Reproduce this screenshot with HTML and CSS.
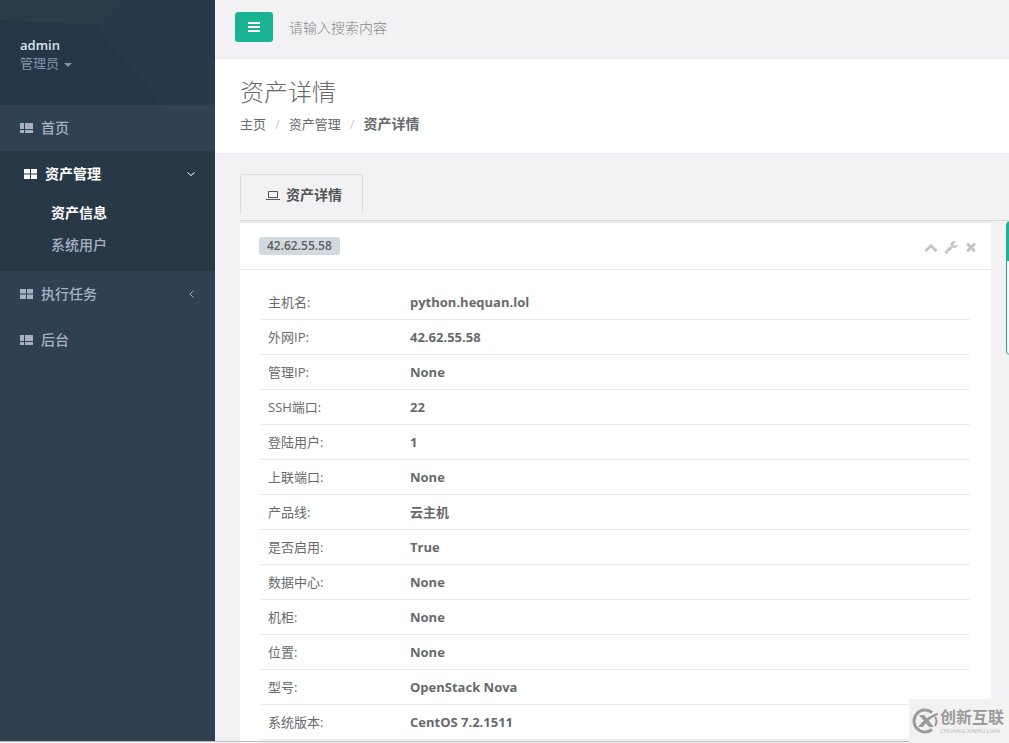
FILE: index.html
```
<!DOCTYPE html>
<html lang="zh-CN">
<head>
  <meta charset="UTF-8">
  <meta name="viewport" content="width=device-width, initial-scale=1.0">
  <title>资产详情</title>
  <link rel="stylesheet" href="styles.css">
</head>
<body>
  <div id="wrapper">
    <nav class="sidebar">
      <div class="nav-header">
        <svg class="header-bg" viewBox="0 0 215 105" preserveAspectRatio="none" aria-hidden="true">
          <path d="M0 20L95 25L163 105H0z" fill="#243747"/>
          <path d="M95 25L125 0H215V105H163z" fill="#273a49"/>
        </svg>
        <a class="profile" href="#">
          <strong>admin</strong>
          <span>管理员 <b class="caret"></b></span>
        </a>
      </div>
      <ul class="menu">
        <li>
          <a href="#">
            <svg class="icon" viewBox="0 0 13 10"><path d="M0 0h4v3H0zM5 0h8v6H5zM0 3h4v3H0zM0 7h4v3H0zM5 7h8v3H5z"/></svg>
            <span>首页</span>
          </a>
        </li>
        <li class="active">
          <a href="#">
            <svg class="icon" viewBox="0 0 13 10"><path d="M0 0h6v4.500H0zM7 0h6v4.500H7zM0 5.500h6V10H0zM7 5.500h6V10H7z"/></svg>
            <span>资产管理</span>
            <svg class="arrow" viewBox="0 0 8 8"><path d="M.5 2.500L4 5.500L7.500 2.500"/></svg>
          </a>
          <ul class="submenu">
            <li class="current"><a href="#">资产信息</a></li>
            <li><a href="#">系统用户</a></li>
          </ul>
        </li>
        <li>
          <a href="#">
            <svg class="icon" viewBox="0 0 13 10"><path d="M0 0h6v4.500H0zM7 0h6v4.500H7zM0 5.500h6V10H0zM7 5.500h6V10H7z"/></svg>
            <span>执行任务</span>
            <svg class="arrow" viewBox="0 0 8 8"><path d="M6.500 .5L3 4L6.500 7.500"/></svg>
          </a>
        </li>
        <li>
          <a href="#">
            <svg class="icon" viewBox="0 0 13 10"><path d="M0 0h4v3H0zM5 0h8v6H5zM0 3h4v3H0zM0 7h4v3H0zM5 7h8v3H5z"/></svg>
            <span>后台</span>
          </a>
        </li>
      </ul>
    </nav>

    <main class="page">
      <header class="topbar">
        <button class="toggle" type="button" aria-label="菜单">
          <svg viewBox="0 0 12 10"><path d="M0 0h12v2H0zM0 4h12v2H0zM0 8h12v2H0z"/></svg>
        </button>
        <input class="search" type="text" placeholder="请输入搜索内容" aria-label="请输入搜索内容">
      </header>

      <section class="heading">
        <h2>资产详情</h2>
        <ol class="breadcrumb">
          <li><a href="#">主页</a></li>
          <li><a href="#">资产管理</a></li>
          <li><strong>资产详情</strong></li>
        </ol>
      </section>

      <div class="tabs">
        <a class="tab" href="#">
          <svg viewBox="0 0 14 10"><path d="M2.500 1.500h9v6h-9zM0 9.500h14" fill="none" stroke="currentColor"/></svg>
          <span>资产详情</span>
        </a>
      </div>

      <div class="columns">
        <section class="ibox">
          <div class="ibox-title">
            <span class="label">42.62.55.58</span>
            <div class="tools">
              <a href="#" aria-label="收起">
                <svg viewBox="0 0 1792 1792"><path d="M1683 1331l-166 165q-19 19-45 19t-45-19l-531-531-531 531q-19 19-45 19t-45-19l-166-165q-19-19-19-45.500t19-45.500l742-741q19-19 45-19t45 19l742 741q19 19 19 45.500t-19 45.500z"/></svg>
              </a>
              <a href="#" aria-label="设置">
                <svg viewBox="0 0 1792 1792"><path d="M448 1472q0-26-19-45t-45-19-45 19-19 45 19 45 45 19 45-19 19-45zm644-420l-682 682q-37 37-90 37-52 0-91-37l-106-108q-38-36-38-90 0-53 38-91l681-681q39 98 114.500 173.500t173.500 114.500zm634-435q0 39-23 106-47 134-164.500 217.500t-258.500 83.500q-185 0-316.500-131.500t-131.500-316.500 131.500-316.500 316.500-131.500q58 0 121.500 16.500t107.500 46.500q16 11 16 28t-16 28l-293 169v224l193 107q5-3 79-48.500t135.500-81 70.500-35.500q15 0 23.500 10t8.500 25z"/></svg>
              </a>
              <a href="#" aria-label="关闭">
                <svg viewBox="0 0 1792 1792"><path d="M1490 1322q0 40-28 68l-136 136q-28 28-68 28t-68-28l-294-294-294 294q-28 28-68 28t-68-28l-136-136q-28-28-28-68t28-68l294-294-294-294q-28-28-28-68t28-68l136-136q28-28 68-28t68 28l294 294 294-294q28-28 68-28t68 28l136 136q28 28 28 68t-28 68l-294 294 294 294q28 28 28 68z"/></svg>
              </a>
            </div>
          </div>
          <div class="ibox-content">
            <table class="detail">
              <tbody>
                <tr><th scope="row">主机名:</th><td>python.hequan.lol</td></tr>
                <tr><th scope="row">外网IP:</th><td>42.62.55.58</td></tr>
                <tr><th scope="row">管理IP:</th><td>None</td></tr>
                <tr><th scope="row">SSH端口:</th><td>22</td></tr>
                <tr><th scope="row">登陆用户:</th><td>1</td></tr>
                <tr><th scope="row">上联端口:</th><td>None</td></tr>
                <tr><th scope="row">产品线:</th><td>云主机</td></tr>
                <tr><th scope="row">是否启用:</th><td>True</td></tr>
                <tr><th scope="row">数据中心:</th><td>None</td></tr>
                <tr><th scope="row">机柜:</th><td>None</td></tr>
                <tr><th scope="row">位置:</th><td>None</td></tr>
                <tr><th scope="row">型号:</th><td>OpenStack Nova</td></tr>
                <tr><th scope="row">系统版本:</th><td>CentOS 7.2.1511</td></tr>
              </tbody>
            </table>
          </div>
        </section>
        <aside class="side-panel">
          <div class="side-panel-head"></div>
        </aside>
      </div>
    </main>
  </div>

  <div class="watermark">
    <svg viewBox="0 0 26 26">
      <path d="M20 4.500A11 11 0 1 0 20 21.500" fill="none" stroke="currentColor" stroke-width="3"/>
      <path d="M23 9q3 4 0 9" fill="none" stroke="currentColor" stroke-width="2"/>
      <path d="M7 7h5l10 12h-5z"/>
      <path d="M26 5C20 6 11 12 6 19h5C15 13 20 9 26 7z"/>
    </svg>
    <div>
      <strong>创新互联</strong>
      <small>CHUANG XINHU LIAN</small>
    </div>
  </div>
</body>
</html>
```

FILE: styles.css
```
* {
  box-sizing: border-box;
}

body {
  margin: 0;
  height: 100vh;
  overflow: hidden;
  background-color: #f8f8fa;
  color: #676a6c;
  font-family: "Open Sans", "Noto Sans CJK SC", sans-serif;
  font-size: 13px;
  line-height: 18px;
}

a {
  color: inherit;
  text-decoration: none;
}

ul, ol {
  list-style: none;
  margin: 0;
  padding: 0;
}

svg {
  display: block;
  fill: currentColor;
}

#wrapper {
  display: flex;
  height: calc(100vh - 1px);
  overflow: hidden;
  border-bottom: 1px solid #b9bcbe;
}

/* Sidebar */
.sidebar {
  flex: 0 0 215px;
  background-color: #2f4050;
  color: #a7b1c2;
}

.nav-header {
  position: relative;
  height: 105px;
  padding: 36px 20px;
  background-color: #283c4a;
}

.header-bg {
  position: absolute;
  top: 0;
  left: 0;
  width: 100%;
  height: 100%;
}

.profile {
  position: relative;
  display: block;
  color: #8095a8;
}

.profile strong {
  display: block;
  color: #dfe4ed;
  font-weight: 600;
}

.caret {
  display: inline-block;
  margin-left: 2px;
  border: 4px solid transparent;
  border-top-color: currentColor;
  border-bottom: 0;
  vertical-align: middle;
}

.menu > li > a {
  display: flex;
  align-items: center;
  gap: 8px;
  height: 46px;
  padding: 0 20px;
  font-size: 14px;
  font-weight: 500;
}

.menu > li:first-child {
  background-color: #304151;
}

.menu > .active {
  padding-bottom: 10px;
  background-color: #293846;
}

.menu > .active > a {
  padding-left: 24px;
  color: #fff;
  font-weight: 700;
}

.icon {
  width: 13px;
  height: 10px;
}

.arrow {
  width: 8px;
  height: 8px;
  margin-left: auto;
  fill: none;
  stroke: currentColor;
}

.submenu a {
  display: block;
  padding: 7px 10px 7px 51px;
  font-size: 14px;
  font-weight: 500;
}

.submenu .current a {
  color: #fff;
  font-weight: 700;
}

/* Page */
.page {
  flex: 1;
  min-width: 0;
  overflow: hidden;
  background-color: #f2f2f4;
}

.topbar {
  display: flex;
  gap: 10px;
  height: 59px;
  padding: 12px 20px;
  border-bottom: 1px solid #e7eaec;
}

.toggle {
  display: flex;
  align-items: center;
  justify-content: center;
  width: 38px;
  height: 30px;
  padding: 0;
  border: 0;
  border-radius: 3px;
  background-color: #1ab394;
  color: #fff;
  cursor: pointer;
}

.toggle svg {
  width: 12px;
  height: 10px;
}

.search {
  flex: 1;
  min-width: 0;
  height: 30px;
  padding: 0 6px;
  border: 0;
  background: none;
  color: #676a6c;
  font-family: inherit;
  font-size: 14px;
  font-weight: 300;
}

.search::placeholder {
  color: #858587;
}

.heading {
  padding: 20px 25px;
  border-bottom: 1px solid #e7eaec;
  background-color: #fff;
}

.heading h2 {
  margin: 0 0 10px;
  font-size: 24px;
  font-weight: 300;
  line-height: 26px;
}

.breadcrumb {
  display: flex;
}

.breadcrumb li + li::before {
  content: "/";
  padding: 0 9px;
  color: #ccc;
}

.breadcrumb strong {
  font-size: 14px;
}

.tabs {
  display: flex;
  margin: 20px 0 0 25px;
  padding-bottom: 6px;
  border-bottom: 1px solid #d8d9da;
}

.tab {
  display: flex;
  align-items: center;
  gap: 6px;
  height: 40px;
  padding: 0 20px 0 25px;
  border: 1px solid #dddddf;
  border-bottom: 0;
  border-radius: 3px 3px 0 0;
  color: #555;
  font-size: 14px;
  font-weight: 700;
}

.tab svg {
  width: 14px;
  height: 10px;
}

.columns {
  display: flex;
  align-items: flex-start;
  gap: 15px;
  padding-left: 25px;
}

.ibox {
  flex: 1;
  min-width: 0;
  border-top: 2px solid #e7eaec;
  background-color: #fff;
}

.ibox-title {
  display: flex;
  align-items: center;
  justify-content: space-between;
  height: 47px;
  padding: 0 13px 0 19px;
  border-bottom: 1px solid #e7eaec;
}

.label {
  padding: 0 8px;
  border-radius: 3px;
  background-color: #d1dade;
  color: #5e5e5e;
  font-size: 12px;
  font-weight: 600;
}

.tools {
  display: flex;
  gap: 6px;
  padding-top: 2px;
  color: #c4c4c4;
}

.tools svg {
  width: 14px;
  height: 14px;
}

.ibox-content {
  padding: 15px 21px 20px 20px;
}

.detail {
  width: 100%;
  border-spacing: 0;
  table-layout: fixed;
}

.detail th,
.detail td {
  height: 35px;
  padding: 0 8px;
  border-bottom: 1px solid #e7eaec;
  text-align: left;
}

.detail th {
  width: 20%;
  font-weight: 400;
}

.detail td {
  font-weight: 700;
}

/* Second panel runs past the right edge of the page */
.side-panel {
  flex: 0 0 300px;
  height: 134px;
  margin-right: -297px;
  border: 1px solid #1ab394;
  border-radius: 4px;
  background-color: #fff;
}

.side-panel-head {
  height: 39px;
  background-color: #1ab394;
}

.watermark {
  position: absolute;
  right: 0;
  bottom: 0;
  display: flex;
  align-items: center;
  gap: 2px;
  width: 100px;
  height: 44px;
  padding-left: 3px;
  background-color: #f2f2f2;
  color: #9b9b9b;
  white-space: nowrap;
}

.watermark svg {
  width: 26px;
  height: 26px;
}

.watermark strong,
.watermark small {
  display: block;
}

.watermark strong {
  font-size: 16px;
  line-height: 20px;
}

.watermark small {
  color: #b5b5b5;
  font-size: 6px;
  line-height: 8px;
}
```
